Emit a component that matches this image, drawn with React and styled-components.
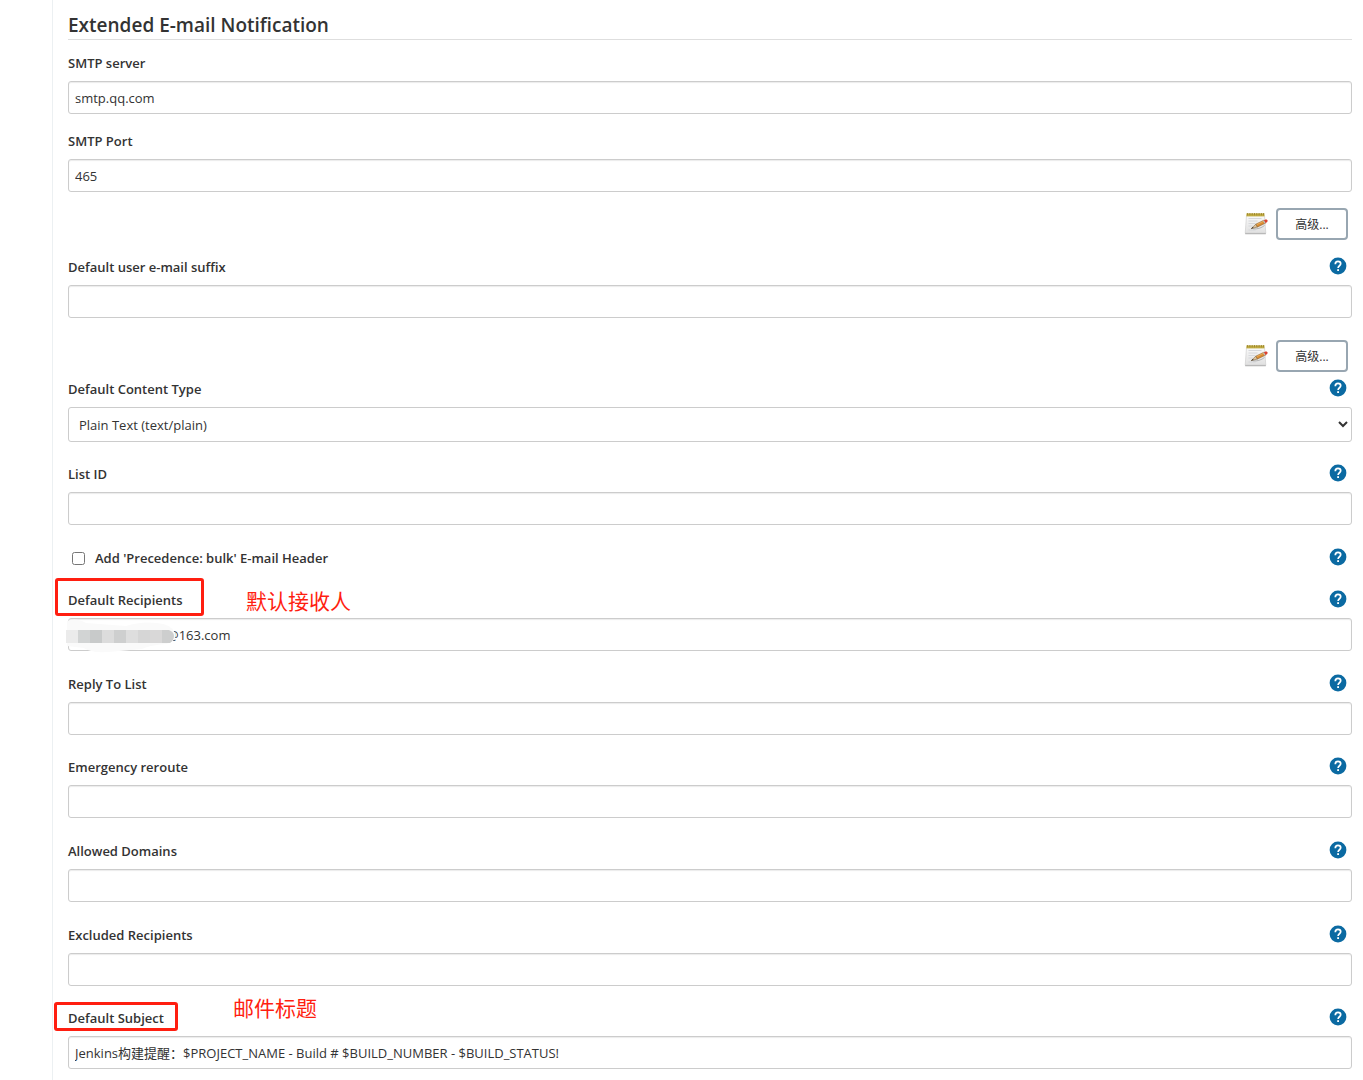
import React from "react";
import styled, { createGlobalStyle } from "styled-components";

const GlobalStyle = createGlobalStyle`
  *, *::before, *::after { box-sizing: border-box; }
  body {
    margin: 0;
    background: #fff;
    color: #333;
    font-family: "Open Sans", "Noto Sans CJK SC", sans-serif;
    font-size: 13px;
    line-height: 20px;
  }
  input, select, button { font: inherit; color: inherit; }
`;

const Page = styled.main`
  min-height: 100vh;
  margin-left: 52px;
  padding: 11px 11px 10px 15px;
  border-left: 1px solid #ecf0f2;
`;

const SectionTitle = styled.h1`
  margin: 0 0 13px;
  border-bottom: 1px solid #dedede;
  font-size: 19px;
  line-height: 28px;
  font-weight: 600;
`;

const Row = styled.div`
  position: relative;
  margin-bottom: ${(p) => p.$gap}px;
`;

const LabelLine = styled.div`
  display: flex;
  align-items: center;
  justify-content: space-between;
  height: 20px;
  padding-right: 5px;
`;

const FieldLabel = styled.label`
  font-weight: 600;
`;

const CheckLabel = styled.label`
  display: flex;
  align-items: center;
  gap: 10px;
  padding-left: 4px;
  font-weight: 600;
`;

const Checkbox = styled.input`
  width: 13px;
  height: 13px;
  margin: 0;
`;

const TextInput = styled.input`
  display: block;
  width: 100%;
  height: 33px;
  margin-top: 8px;
  padding: 0 6px;
  padding-left: ${(p) => (p.$masked ? 98 : 6)}px;
  border: 1px solid #ccc;
  border-radius: 3px;
  background: #fff;
  box-shadow: inset 0 1px 1px rgba(0, 0, 0, 0.08);
  outline: none;
`;

const Select = styled.select`
  display: block;
  width: 100%;
  height: 35px;
  margin-top: 8px;
  padding: 0 1px 0 6px;
  border: 1px solid #ccc;
  border-radius: 3px;
  background: #fff;
`;

const HelpButton = styled.button`
  display: flex;
  padding: 0 0 2px;
  border: 0;
  background: none;
  cursor: pointer;
`;

const Actions = styled.div`
  display: flex;
  justify-content: flex-end;
  align-items: center;
  gap: 8px;
  padding-right: 4px;
  margin-bottom: ${(p) => p.$gap}px;
`;

const AdvancedButton = styled.button`
  width: 72px;
  height: 32px;
  padding: 2px 0 0;
  border: 2px solid #98a6b1;
  border-radius: 4px;
  background: #fff;
  font-size: 12px;
  cursor: pointer;
`;

const Highlight = styled.span`
  position: absolute;
  left: ${(p) => p.$left}px;
  top: ${(p) => p.$top}px;
  width: ${(p) => p.$width}px;
  height: ${(p) => p.$height}px;
  border: 3px solid #ff1e10;
  border-radius: 3px;
  pointer-events: none;
`;

const Note = styled.span`
  position: absolute;
  left: ${(p) => p.$left}px;
  top: ${(p) => p.$top}px;
  color: #ff1e10;
  font-family: "Noto Sans CJK SC", sans-serif;
  font-size: 21px;
  line-height: 28px;
`;

const Mask = styled.svg`
  position: absolute;
  left: -2px;
  top: 28px;
`;

function HelpIcon() {
  return (
    <svg width="18" height="18" viewBox="0 0 18 18" aria-hidden="true">
      <circle cx="9" cy="9" r="8.4" fill="#0b6aa2" />
      <path
        d="M6.3 7.2C6.3 5.4 7.4 4.4 9 4.4s2.7 1 2.7 2.4c0 1.9-2.6 2-2.6 4.2"
        fill="none"
        stroke="#fff"
        strokeWidth="1.7"
      />
      <rect x="8.2" y="12.2" width="1.8" height="1.8" fill="#fff" />
    </svg>
  );
}

function NotepadIcon() {
  return (
    <svg width="24" height="24" viewBox="0 0 24 24" aria-hidden="true">
      <defs>
        <linearGradient id="paper" x1="0" y1="0" x2="0" y2="1">
          <stop offset="0" stopColor="#fafafa" />
          <stop offset="1" stopColor="#e0e0e0" />
        </linearGradient>
      </defs>
      <path d="M1.2 21h20.6v1.2H1.2z" fill="#a0a0a0" />
      <path d="M2.5 3.5h18l1.3 17.7H1.2z" fill="url(#paper)" stroke="#cacaca" strokeWidth=".6" />
      <path d="M2.4 1.4h18v3h-18z" fill="#c3ae43" />
      <path
        d="M3.6 1v2.4M5.9 1v2.4M8.2 1v2.4M10.5 1v2.4M12.8 1v2.4M15.1 1v2.4M17.4 1v2.4M19.6 1v2.4"
        stroke="#9b842c"
        strokeWidth=".9"
      />
      <path
        d="M4.5 6.5h13M4.5 9h9M4.5 11.5h7M4.5 14h4M4.5 18h7"
        stroke="#d2d5d9"
        strokeWidth=".9"
      />
      <path d="M9 16.8c4 .6 8.5-.8 11.5-3.3" stroke="#b5b5b5" strokeWidth="1" fill="none" />
      <path d="M11.8 12.2 20 8.2l1.6 2.9-8.3 4z" fill="#d98a30" stroke="#8b5e28" strokeWidth=".6" />
      <path d="m12.3 12.8 8-3.9" stroke="#efb866" strokeWidth=".8" />
      <path d="m11.8 12.2 1.5 2.9-6.2 1.6z" fill="#dfc195" stroke="#715836" strokeWidth=".5" />
      <path d="m8.9 15 .6 1.1-2.4.6z" fill="#222" />
      <path d="m19.8 8.3 1.6-.8c1.9-.4 2.8 1.1 1.8 2.4l-1.8 1.3z" fill="#dc4030" />
      <path d="m18.9 8.7 1.1-.5 1.5 2.9-1.1.5z" fill="#b8bfbd" />
    </svg>
  );
}

function RedactedName() {
  const tiles = ["#ebebeb", "#d2d4d4", "#c8caca", "#dcdcdc", "#cecfcf", "#dedede", "#d6d6d6", "#d9d8d8", "#cdcece"];
  return (
    <Mask width="112" height="38" viewBox="0 0 112 38" aria-hidden="true">
      <path
        d="M1 3Q10-1 20 5L60 8Q75 3 91 5Q105 6 109 15Q111 24 100 26Q84 27 76 31L42 34Q24 35 18 30L1 28Z"
        fill="#fafafa"
      />
      <svg x="0" y="12" width="109" height="13">
        <defs>
          <clipPath id="maskEnd">
            <path d="M0 0h103q5 2 5 6t-4 7H0z" />
          </clipPath>
        </defs>
        <g clipPath="url(#maskEnd)">
          {tiles.map((fill, i) => (
            <rect key={i} x={i * 12} y="0" width="13" height="13" fill={fill} />
          ))}
        </g>
      </svg>
    </Mask>
  );
}

function Help({ topic }) {
  return (
    <HelpButton type="button" aria-label={`Help: ${topic}`}>
      <HelpIcon />
    </HelpButton>
  );
}

function Field({ id, label, value = "", gap = 23, help = true, masked, options, children }) {
  return (
    <Row $gap={gap}>
      <LabelLine>
        <FieldLabel htmlFor={id}>{label}</FieldLabel>
        {help && <Help topic={label} />}
      </LabelLine>
      {options ? (
        <Select id={id}>
          {options.map((o) => (
            <option key={o}>{o}</option>
          ))}
        </Select>
      ) : (
        <TextInput id={id} type="text" defaultValue={value} $masked={masked} />
      )}
      {children}
    </Row>
  );
}

function Advanced({ gap }) {
  return (
    <Actions $gap={gap}>
      <NotepadIcon />
      <AdvancedButton type="button">高级...</AdvancedButton>
    </Actions>
  );
}

export default function App() {
  return (
    <>
      <GlobalStyle />
      <Page>
        <SectionTitle>Extended E-mail Notification</SectionTitle>
        <Field id="server" label="SMTP server" value="smtp.qq.com" help={false} gap={17} />
        <Field id="port" label="SMTP Port" value="465" help={false} gap={16} />
        <Advanced gap={17} />
        <Field id="suffix" label="Default user e-mail suffix" gap={22} />
        <Advanced gap={7} />
        <Field id="type" label="Default Content Type" options={["Plain Text (text/plain)", "HTML (text/html)"]} gap={22} />
        <Field id="list" label="List ID" />
        <Row $gap={22}>
          <LabelLine>
            <CheckLabel>
              <Checkbox type="checkbox" />
              Add 'Precedence: bulk' E-mail Header
            </CheckLabel>
            <Help topic="Precedence: bulk" />
          </LabelLine>
        </Row>
        <Field id="recipients" label="Default Recipients" value="@163.com" masked>
          <RedactedName />
          <Highlight $left={-13} $top={-12} $width={149} $height={38} />
          <Note $left={178} $top={-4}>默认接收人</Note>
        </Field>
        <Field id="reply" label="Reply To List" gap={22} />
        <Field id="reroute" label="Emergency reroute" />
        <Field id="domains" label="Allowed Domains" />
        <Field id="excluded" label="Excluded Recipients" gap={22} />
        <Field
          id="subject"
          label="Default Subject"
          value="Jenkins构建提醒：$PROJECT_NAME - Build # $BUILD_NUMBER - $BUILD_STATUS!"
          gap={0}
        >
          <Highlight $left={-14} $top={-6} $width={124} $height={29} />
          <Note $left={165} $top={-15}>邮件标题</Note>
        </Field>
      </Page>
    </>
  );
}
